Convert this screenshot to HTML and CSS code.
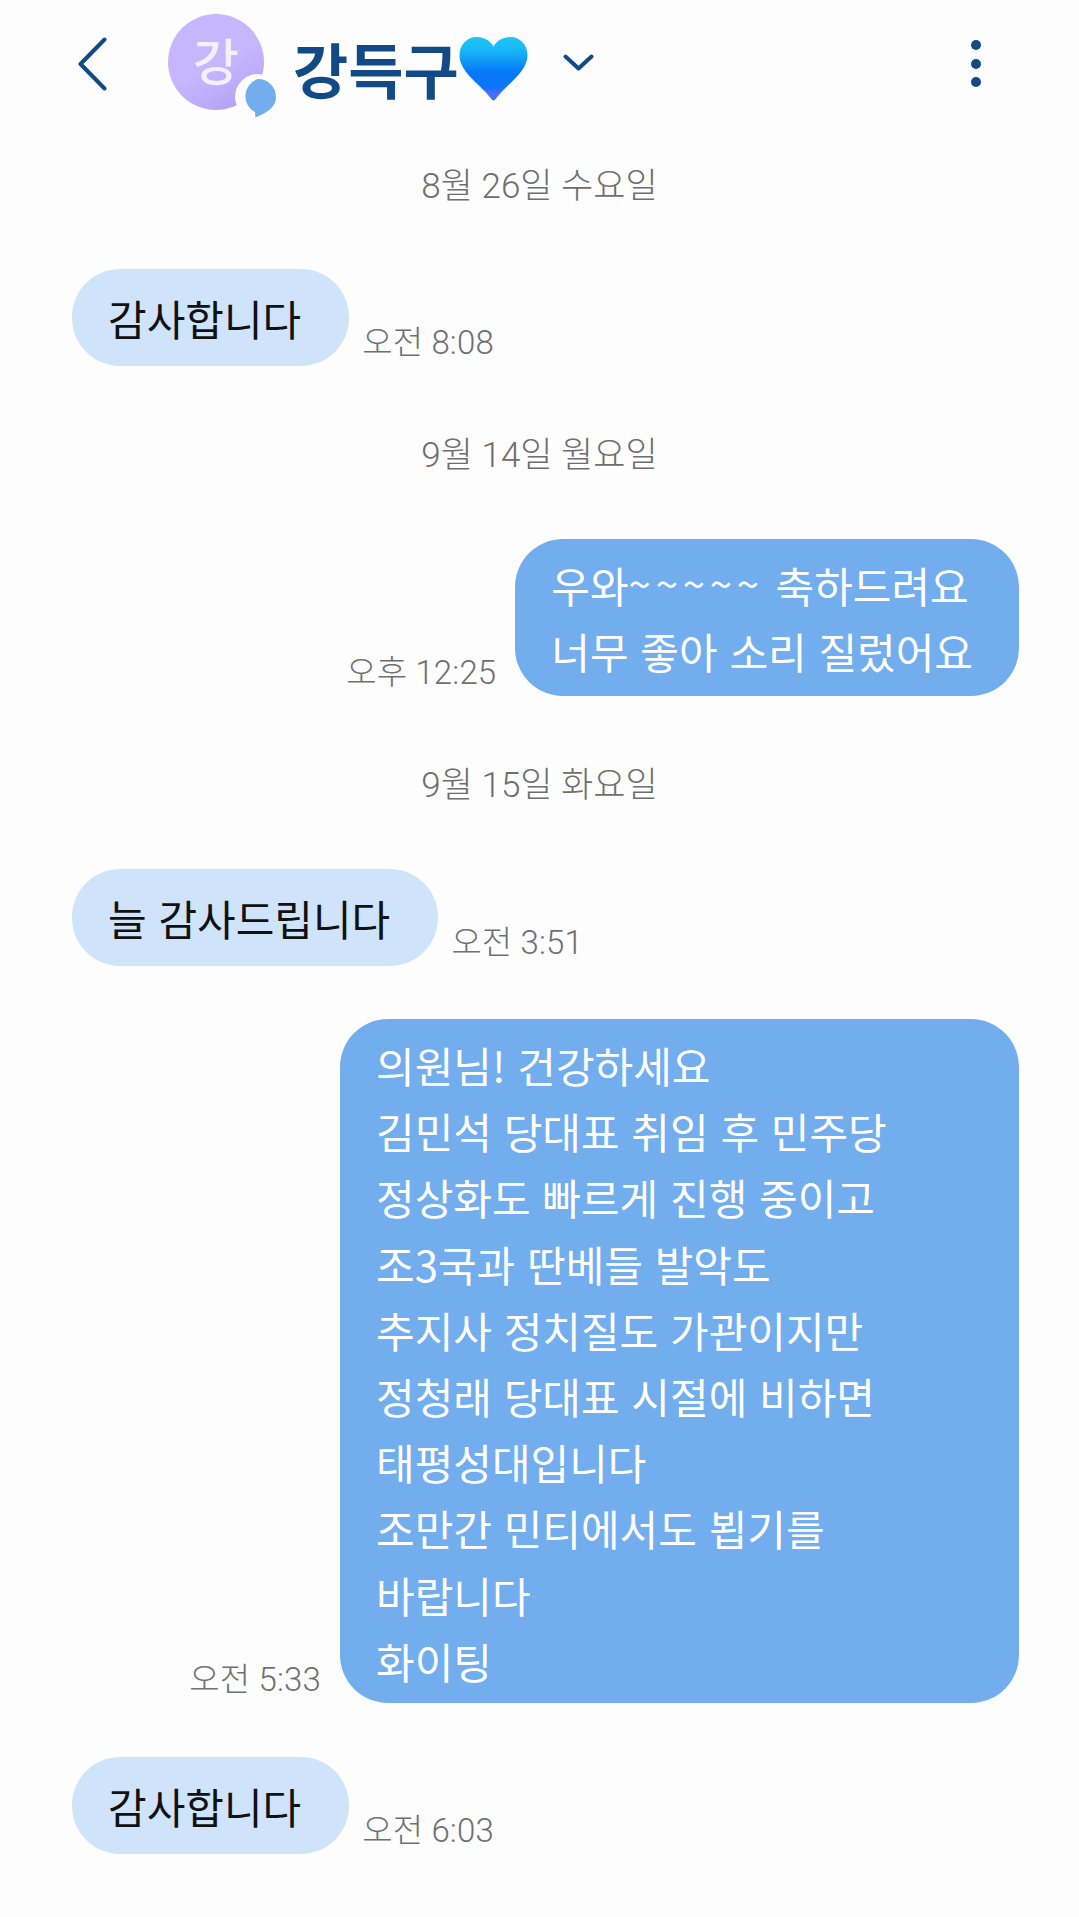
FILE: index.html
```html
<!DOCTYPE html>
<html lang="ko">
<head>
<meta charset="utf-8">
<title>강득구</title>
<link rel="stylesheet" href="styles.css">
</head>
<body>
<div class="screen">
  <header class="top">
    <svg class="back" viewBox="0 0 29 54"><path d="M26.500 2.500 L2.500 27 L26.500 51.500"/></svg>
    <div class="avatar">
      <span class="avatar-letter">강</span>
      <svg class="avatar-badge" viewBox="0 0 46 46"><circle cx="23" cy="23" r="23" fill="#fdfdfd"/><path d="M23 5a18 18 0 0 1 18 18c0 9-6.500 14.500-20.500 20.500l-.3-2.800v-2.500A18 18 0 0 1 23 5z" fill="#72adee"/></svg>
    </div>
    <h1 class="name">강득구</h1>
    <svg class="heart" viewBox="0 0 69 65">
      <defs>
        <linearGradient id="hg" x1="0" y1="0" x2="0" y2="1">
          <stop offset="0" stop-color="#1fc4f5"/>
          <stop offset=".2" stop-color="#19b8f8"/>
          <stop offset=".55" stop-color="#0479f6"/>
          <stop offset=".8" stop-color="#0f74fa"/>
          <stop offset=".9" stop-color="#4f6cf9"/>
          <stop offset="1" stop-color="#2c7df2"/>
        </linearGradient>
      </defs>
      <path d="M34.500 64.500C33 64.500 31 61 27 56.500 16 45 .5 33.500 .5 19.500 .5 8.500 8 1 18 1c7 0 13 3.500 16.500 9.500C38 4.500 44 1 51 1c10 0 17.500 7.500 17.500 18.500 0 14-15.500 25.500-26.500 37-4 4.500-6 8-7.500 8z" fill="url(#hg)"/>
    </svg>
    <svg class="caret" viewBox="0 0 31 17"><path d="M2.500 2.500 L15.500 14.500 L28.500 2.500"/></svg>
    <div class="menu"><i></i><i></i><i></i></div>
  </header>

  <div class="date date-1">8월 26일 수요일</div>
  <div class="row in row-1"><div class="bubble">감사합니다</div><span class="time">오전 8:08</span></div>

  <div class="date date-2">9월 14일 월요일</div>
  <div class="row out row-2"><span class="time">오후 12:25</span><div class="bubble">우와<span class="tilde">~~~~~</span> 축하드려요<br>너무 좋아 소리 질렀어요</div></div>

  <div class="date date-3">9월 15일 화요일</div>
  <div class="row in row-3"><div class="bubble">늘 감사드립니다</div><span class="time">오전 3:51</span></div>

  <div class="row out row-4"><span class="time">오전 5:33</span><div class="bubble">의원님! 건강하세요<br>김민석 당대표 취임 후 민주당<br>정상화도 빠르게 진행 중이고<br>조3국과 딴베들 발악도<br>추지사 정치질도 가관이지만<br>정청래 당대표 시절에 비하면<br>태평성대입니다<br>조만간 민티에서도 뵙기를<br>바랍니다<br>화이팅</div></div>

  <div class="row in row-5"><div class="bubble">감사합니다</div><span class="time">오전 6:03</span></div>
</div>
</body>
</html>
```

FILE: styles.css
```css
html, body { margin: 0; padding: 0; background: #fdfdfd; overflow: hidden; }
.screen {
  width: 1079px;
  height: 1917px;
  font-family: Roboto, "Noto Sans CJK KR", "Noto Sans", sans-serif;
  background: #fdfdfd;
}
.top { display: flex; align-items: center; height: 124px; padding-left: 78px; box-sizing: border-box; }
.back { width: 29px; height: 54px; flex: none; margin-top: 4px; }
.back path { fill: none; stroke: #124a86; stroke-width: 4; stroke-linecap: round; stroke-linejoin: round; }
.avatar {
  position: relative; flex: none; width: 96px; height: 96px; margin-left: 61px; border-radius: 50%;
  background: linear-gradient(152deg, #c4b7fc 52%, #bcaef9 70%, #ab9cf0 100%);
  display: flex; align-items: center; justify-content: center;
}
.avatar-letter { color: #f3f0ff; font-size: 50px; font-weight: 500; line-height: 1; position: relative; top: -3px; font-family: "Noto Sans CJK KR", sans-serif; }
.avatar-badge { position: absolute; left: 67px; top: 60px; width: 46px; height: 46px; }
.name { margin: 12px 0 0 29px; font-size: 60px; font-weight: 700; color: #124a86; line-height: 1; font-family: "Noto Sans CJK KR", sans-serif; }
.heart { width: 69px; height: 65px; flex: none; margin: 12px 0 0 0; }
.caret { width: 31px; height: 17px; flex: none; margin-left: 35px; }
.caret path { fill: none; stroke: #124a86; stroke-width: 4; stroke-linecap: round; stroke-linejoin: round; }
.menu { display: flex; flex-direction: column; gap: 8.500px; margin-left: auto; margin-right: 98px; margin-top: 3px; }
.menu i { display: block; width: 10px; height: 10px; border-radius: 50%; background: #124a86; }

.date { text-align: center; font-size: 35px; font-weight: 300; line-height: 40px; color: #6e6e6e; }
.date-1 { margin-top: 43px; }
.date-2 { margin-top: 70px; }
.date-3 { margin-top: 70px; }

.row { display: flex; align-items: flex-end; gap: 13px; padding: 0 60px 0 72px; }
.row.out { justify-content: flex-end; gap: 19px; }
.bubble { font-size: 42px; border-radius: 48px; font-family: "Noto Sans CJK KR", sans-serif; }
.in .bubble { background: #cfe4fb; color: #111; line-height: 97px; height: 97px; padding: 0 48px 0 36px; }
.out .bubble { background: #72adee; color: #fff; line-height: 66.200px; padding: 13px 46px 11.600px 36px; }
.tilde { font-size: 40px; letter-spacing: 4.800px; line-height: 0; position: relative; top: -3px; }
.row-4 .bubble { width: 679px; box-sizing: border-box; padding-bottom: 9px; }
.time { font-size: 33px; font-weight: 300; letter-spacing: .15px; line-height: 36px; color: #707070; margin-bottom: 5px; }
.row-1 { margin-top: 62px; }
.row-2 { margin-top: 63px; }
.row-3 { margin-top: 63px; }
.row-4 { margin-top: 53px; }
.row-5 { margin-top: 54px; }
```
